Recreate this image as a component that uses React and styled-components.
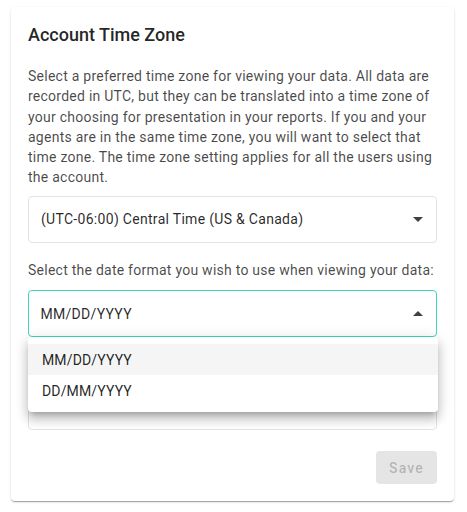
import React from 'react'
import styled, { createGlobalStyle } from 'styled-components'

const Global = createGlobalStyle`
  html, body {
    margin: 0;
    padding: 0;
    background: #ffffff;
    font-family: Roboto, "Liberation Sans", Arial, sans-serif;
  }
`

const Page = styled.div`
  padding: 7px 13px 10px 11px;
`

const Card = styled.div`
  width: 443px;
  box-sizing: border-box;
  background: #fff;
  border-radius: 4px;
  box-shadow: 0 2px 1px -1px rgba(0,0,0,0.2), 0 1px 1px 0 rgba(0,0,0,0.14), 0 1px 3px 0 rgba(0,0,0,0.12);
  padding: 16px 17px 17px 17px;
  display: flex;
  flex-direction: column;
`

const Title = styled.h2`
  margin: 0;
  font-size: 18px;
  font-weight: 500;
  line-height: 24px;
  letter-spacing: 0;
  color: rgba(0,0,0,0.87);
`

const Text = styled.p`
  margin: ${p => p.$mt || 0}px 0 0 0;
  font-size: 14px;
  line-height: 20.3px;
  letter-spacing: 0.25px;
  color: rgba(0,0,0,0.72);
`

const Field = styled.div`
  position: relative;
  margin-top: ${p => p.$mt || 0}px;
`

const SelectBox = styled.div`
  height: 47px;
  box-sizing: border-box;
  border: ${p => (p.$focused ? '1.5px solid #3dd6bd' : '1px solid #e3e3e3')};
  border-radius: 4px;
  display: flex;
  align-items: center;
  justify-content: space-between;
  padding: 0 6px 0 ${p => (p.$focused ? 11.5 : 12)}px;
  font-size: 14px;
  letter-spacing: 0.3px;
  color: rgba(0,0,0,0.85);
`

const Arrow = ({ up }) => (
  <svg width="24" height="24" viewBox="0 0 24 24" fill="rgba(0,0,0,0.75)">
    <path d={up ? 'M7 14l5-5 5 5z' : 'M7 10l5 5 5-5z'} />
  </svg>
)

const Menu = styled.ul`
  position: absolute;
  left: 0;
  right: -1px;
  top: 47px;
  margin: 0;
  padding: 7px 0 6px;
  list-style: none;
  background: #fff;
  border-radius: 4px;
  box-shadow: 0 5px 5px -3px rgba(0,0,0,0.2), 0 8px 10px 1px rgba(0,0,0,0.14), 0 3px 14px 2px rgba(0,0,0,0.12);
  z-index: 2;
`

const Item = styled.li`
  height: 31px;
  display: flex;
  align-items: center;
  padding: 0 14px;
  font-size: 14px;
  letter-spacing: 0.15px;
  color: rgba(0,0,0,0.87);
  background: ${p => (p.$active ? '#f5f5f5' : 'transparent')};
`

const Footer = styled.div`
  display: flex;
  justify-content: flex-end;
  margin-top: 21px;
`

const SaveButton = styled.button`
  width: 61px;
  height: 33px;
  border: none;
  border-radius: 4px;
  background: #e5e5e5;
  color: rgba(0,0,0,0.22);
  font-family: inherit;
  font-size: 14px;
  font-weight: 500;
  letter-spacing: 1.2px;
  cursor: default;
`

export default function App() {
  return (
    <>
      <Global />
      <Page>
        <Card>
          <Title>Account Time Zone</Title>
          <Text $mt={19}>
            Select a preferred time zone for viewing your data. All data are recorded in UTC, but
            they can be translated into a time zone of your choosing for presentation in your
            reports. If you and your agents are in the same time zone, you will want to select that
            time zone. The time zone setting applies for all the users using the account.
          </Text>
          <Field $mt={8}>
            <SelectBox>
              <span>(UTC-06:00) Central Time (US &amp; Canada)</span>
              <Arrow />
            </SelectBox>
          </Field>
          <Text $mt={17}>Select the date format you wish to use when viewing your data:</Text>
          <Field $mt={10}>
            <SelectBox $focused>
              <span>MM/DD/YYYY</span>
              <Arrow up />
            </SelectBox>
            <Menu>
              <Item $active>MM/DD/YYYY</Item>
              <Item>DD/MM/YYYY</Item>
            </Menu>
          </Field>
          <Field $mt={46}>
            <SelectBox>
              <span>12 hour</span>
              <Arrow />
            </SelectBox>
          </Field>
          <Footer>
            <SaveButton disabled>Save</SaveButton>
          </Footer>
        </Card>
      </Page>
    </>
  )
}
